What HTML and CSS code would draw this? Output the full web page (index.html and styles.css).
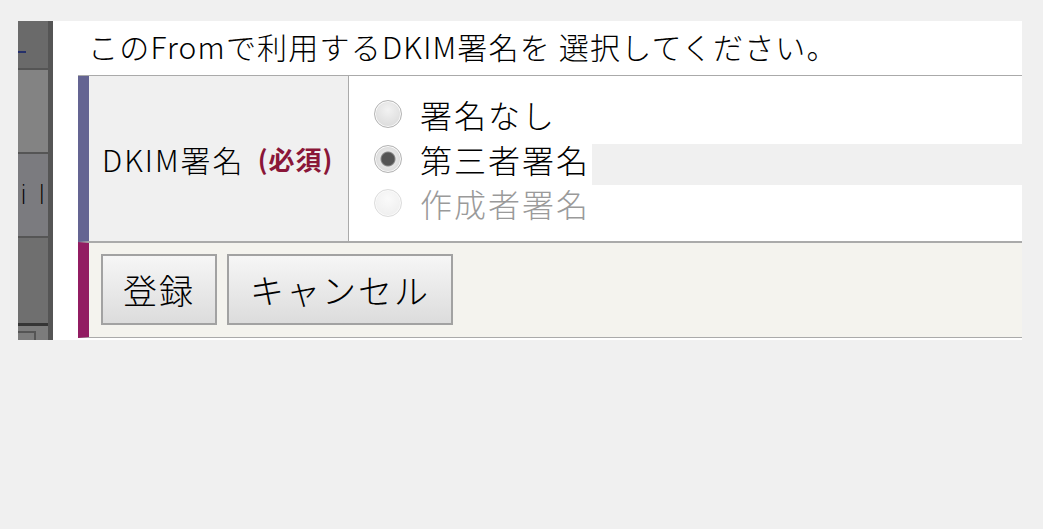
FILE: index.html
```html
<!DOCTYPE html>
<html lang="ja">
<head>
  <meta charset="UTF-8" />
  <meta name="viewport" content="width=device-width, initial-scale=1.0" />
  <title>DKIM署名の選択</title>
  <link rel="stylesheet" href="styles.css">
</head>
<body>
  <div class="window">
    <aside class="sidebar">
      <div class="seg seg-top"><span class="dash"></span></div>
      <div class="seg seg-light"></div>
      <div class="seg seg-mail"><span>i</span><span>l</span></div>
      <div class="seg seg-dark"></div>
      <div class="seg seg-foot"><span class="box"></span></div>
    </aside>

    <main class="content">
      <p class="lead">このFromで利用するDKIM署名を 選択してください。</p>

      <form class="form-table" onsubmit="return false;">
        <div class="row row-field">
          <div class="label-cell">DKIM署名<span class="req">(必須)</span></div>
          <div class="value-cell">
            <label class="option">
              <input type="radio" name="dkim" value="none">
              <span>署名なし</span>
            </label>
            <label class="option">
              <input type="radio" name="dkim" value="third" checked>
              <span>第三者署名</span>
              <span class="fill"></span>
            </label>
            <label class="option disabled">
              <input type="radio" name="dkim" value="author" disabled>
              <span>作成者署名</span>
            </label>
          </div>
        </div>
        <div class="row row-actions">
          <button type="submit" class="btn">登録</button>
          <button type="button" class="btn">キャンセル</button>
        </div>
      </form>
    </main>
  </div>
</body>
</html>
```

FILE: styles.css
```css
body {
  margin: 0;
  background: #f0f0f0;
  font-family: "Noto Sans CJK JP", "Noto Sans", sans-serif;
  font-weight: 300;
  color: #000;
}

.window {
  display: flex;
  width: 1004px;
  height: 319px;
  margin: 21px 0 0 18px;
  background: #fff;
}

/* left nav strip, cut off by the frame */
.sidebar {
  width: 30px;
  flex-shrink: 0;
  display: flex;
  flex-direction: column;
  border-right: 5px solid #555;
  background: #6f6f6f;
}
.seg { position: relative; overflow: hidden; }
.seg-top { height: 47px; background: #6a6a6a; border-bottom: 2px solid #555; }
.seg-top .dash {
  position: absolute;
  left: 0;
  top: 30px;
  width: 8px;
  height: 2px;
  background: #25306a;
}
.seg-light { height: 82px; background: #838383; border-bottom: 2px solid #555; }
.seg-mail {
  height: 82px;
  display: flex;
  align-items: center;
  gap: 11px;
  padding-left: 2px;
  background: #7b7b7f;
  border-bottom: 2px solid #555;
  font-family: "DejaVu Sans", sans-serif;
  font-size: 26px;
}
.seg-dark { height: 85px; background: #6f6f6f; border-bottom: 3px solid #353535; }
.seg-foot { flex: 1; background: #7c7c7c; }
.seg-foot .box {
  display: block;
  width: 16px;
  height: 20px;
  margin-top: 5px;
  border-top: 2px solid #555;
  border-right: 2px solid #555;
}

.content {
  flex: 1;
  padding-left: 25px;
}

.lead {
  margin: 0;
  height: 54px;
  padding-left: 10px;
  font-size: 30px;
  line-height: 50px;
  letter-spacing: 1.2px;
  white-space: nowrap;
}

.form-table {
  border-top: 1px solid #aaa;
}
.row {
  display: flex;
  border-bottom: 1px solid #aaa;
}
.row-field {
  height: 165px;
  border-left: 11px solid #646492;
}
.row-actions {
  height: 96px;
  box-sizing: border-box;
  border-left: 11px solid #921c62;
  border-top: 1px solid #aaa;
  background: #f4f3ee;
  padding: 11px 0 0 12px;
  gap: 10px;
}

.label-cell {
  width: 260px;
  flex-shrink: 0;
  display: flex;
  align-items: center;
  padding-left: 13px;
  box-sizing: border-box;
  background: #f0f0f0;
  border-right: 1px solid #aaa;
  font-size: 30px;
  letter-spacing: 2px;
}
.req {
  margin-left: 13px;
  color: #8a1638;
  font-size: 26px;
  font-weight: bold;
  letter-spacing: 1px;
}

.value-cell {
  flex: 1;
  padding: 16px 0 0 25px;
}
.option {
  display: flex;
  align-items: center;
  height: 44.5px;
  font-size: 32px;
  letter-spacing: 2px;
}
.option .fill {
  flex: 1;
  align-self: flex-start;
  height: 41px;
  margin: 7px 0 0 2px;
  background: #f0f0f0;
}
.option.disabled { color: #9a9a9a; }

.option input {
  appearance: none;
  width: 28px;
  height: 28px;
  margin: 0 18px 0 0;
  border: 1px solid #b4b4b4;
  border-radius: 50%;
  background: radial-gradient(circle at 50% 35%, #f2f2f2, #d6d6d6);
  box-shadow: inset 0 0 0 1px #fafafa;
}
.option input:checked {
  background: radial-gradient(circle, #555 0 6px, #8a8a8a 7px, #e6e6e6 8px, #d0d0d0);
}
.option input:disabled {
  border-color: #dcdcdc;
  background: radial-gradient(circle at 50% 35%, #fafafa, #ececec);
}

.btn {
  height: 71px;
  padding: 0 21px;
  border: 2px solid #a2a2a2;
  background: linear-gradient(#f6f6f6, #dcdcdc);
  font-family: inherit;
  font-weight: 300;
  font-size: 34px;
  letter-spacing: 2px;
  color: #000;
  cursor: pointer;
}
.btn:first-child { width: 116px; padding: 0; }
.btn:hover { background: linear-gradient(#fafafa, #e4e4e4); }
```
